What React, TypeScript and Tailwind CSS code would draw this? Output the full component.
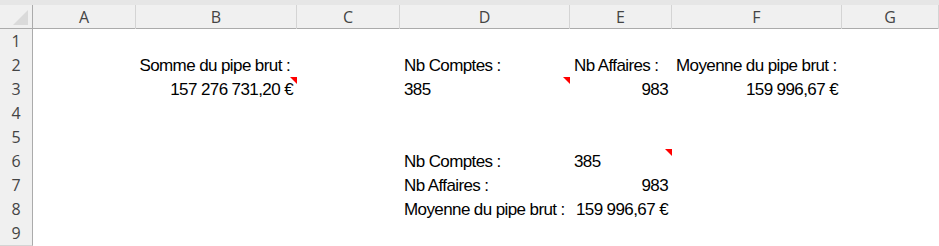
import React from 'react'

const cols = ['A', 'B', 'C', 'D', 'E', 'F', 'G']

type Cell = { text?: string; align?: 'left' | 'right'; pad?: string; note?: boolean }

// cellules par ligne (index colonne A=0)
const rows: Record<number, Record<number, Cell>> = {
  2: {
    1: { text: 'Somme du pipe brut :', align: 'right', pad: 'pr-[7px]' },
    3: { text: 'Nb Comptes :' },
    4: { text: 'Nb Affaires :' },
    5: { text: 'Moyenne du pipe brut :' },
  },
  3: {
    1: { text: '157 276 731,20 €', align: 'right', note: true },
    3: { text: '385', note: true },
    4: { text: '983', align: 'right' },
    5: { text: '159 996,67 €', align: 'right' },
  },
  6: {
    3: { text: 'Nb Comptes :' },
    4: { text: '385', note: true },
  },
  7: {
    3: { text: 'Nb Affaires :' },
    4: { text: '983', align: 'right' },
  },
  8: {
    3: { text: 'Moyenne du pipe brut :' },
    4: { text: '159 996,67 €', align: 'right' },
  },
}

const gridCols = 'grid grid-cols-[33px_103px_161px_103px_170px_102px_170px_1fr]'

export default function App() {
  return (
    <div className="w-[939px] h-[246px] overflow-hidden bg-white font-['Liberation_Sans',sans-serif] text-black">
      <div className="h-[5px] bg-[#e6e6e6]" />
      <div className={`${gridCols} h-[24px] bg-[#f0f0f0] border-b border-[#ababab]`}>
        <div className="relative border-r border-[#ababab]">
          <div className="absolute right-[4px] bottom-[4px] w-0 h-0 border-l-[15px] border-l-transparent border-b-[15px] border-b-[#dadada]" />
        </div>
        {cols.map((c) => (
          <div
            key={c}
            className="flex items-center justify-center border-r border-[#d4d4d4] text-[16px] text-[#444] font-['Open_Sans',sans-serif]"
          >
            {c}
          </div>
        ))}
      </div>
      {[1, 2, 3, 4, 5, 6, 7, 8, 9].map((r) => (
        <div key={r} className={`${gridCols} h-[24px]`}>
          <div className="flex items-center justify-center bg-[#f0f0f0] border-r border-[#ababab] border-b border-b-[#d4d4d4] text-[16px] text-[#444] font-['Open_Sans',sans-serif]">
            {r}
          </div>
          {cols.map((c, i) => {
            const cell = rows[r]?.[i]
            const pad = cell?.pad ?? (cell?.align === 'right' ? 'pr-[4px]' : 'pl-[4px]')
            return (
              <div
                key={c}
                className={`relative flex items-center whitespace-nowrap text-[17px] tracking-[-0.6px] ${
                  cell?.align === 'right' ? 'justify-end' : 'justify-start'
                } ${pad}`}
              >
                {cell?.text}
                {cell?.note && (
                  <div className="absolute right-0 top-0 w-0 h-0 border-l-[7px] border-l-transparent border-t-[7px] border-t-[#ff0000]" />
                )}
              </div>
            )
          })}
        </div>
      ))}
    </div>
  )
}
